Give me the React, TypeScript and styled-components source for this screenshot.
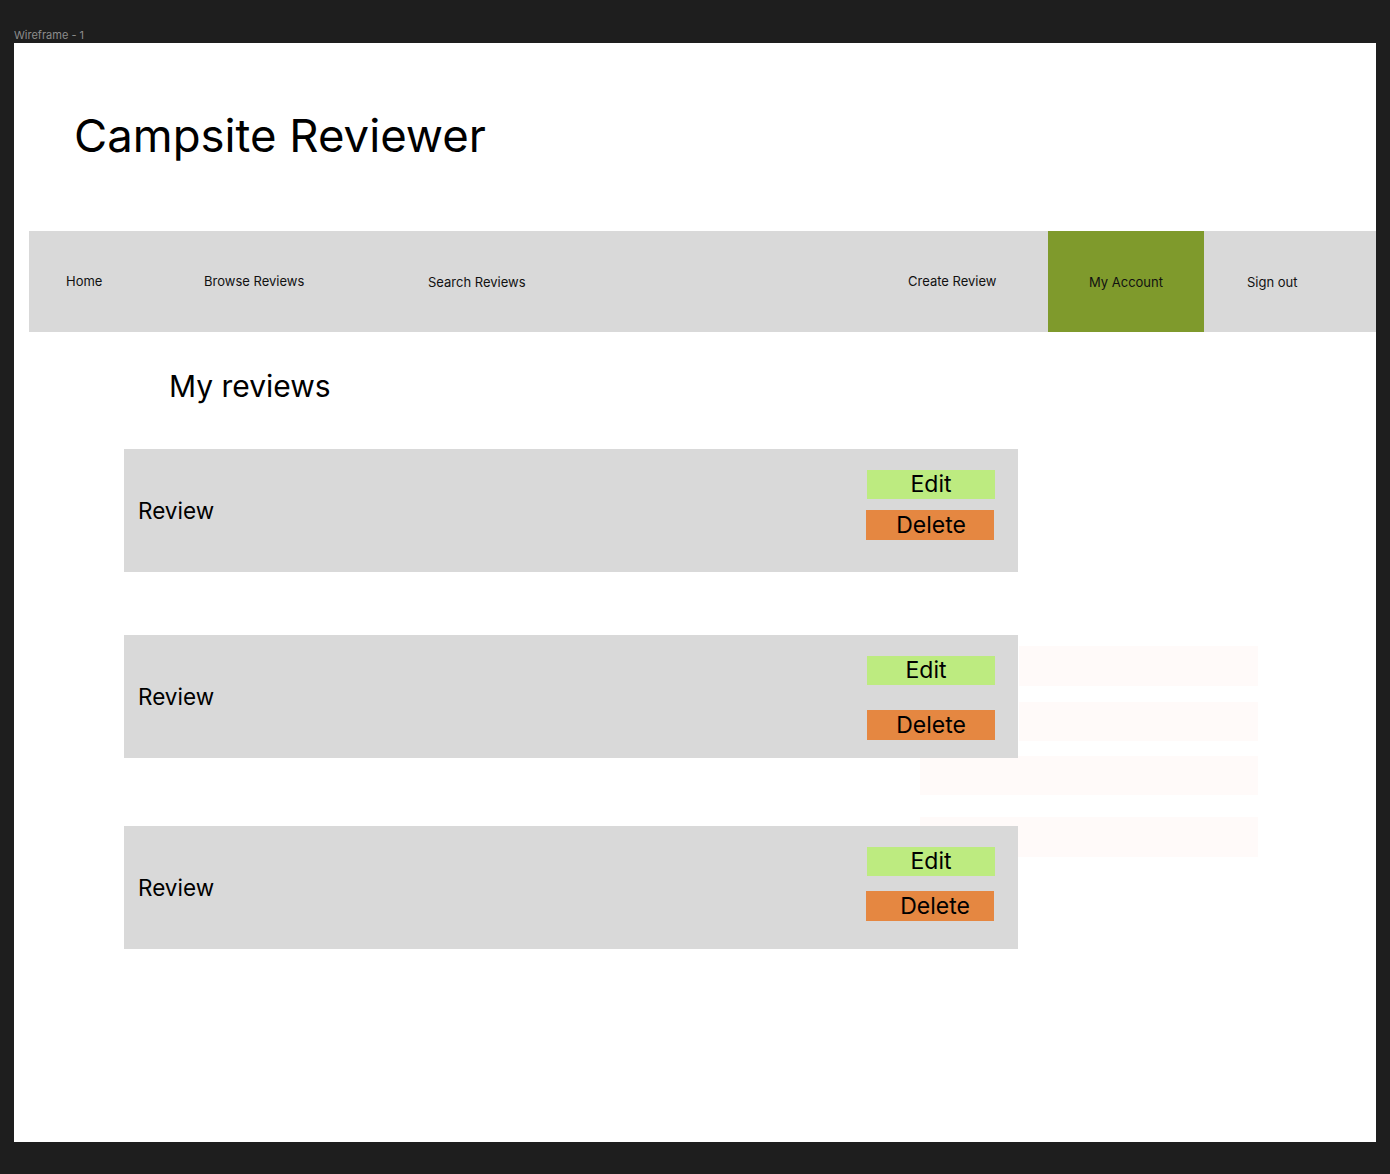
import React from "react";
import styled, { createGlobalStyle } from "styled-components";

const GlobalStyle = createGlobalStyle`
  html, body {
    margin: 0;
    padding: 0;
    background: #1e1e1e;
    font-family: Inter, "Noto Sans", "Liberation Sans", sans-serif;
  }
  * { box-sizing: border-box; }
`;

const Canvas = styled.div`
  width: 1390px;
  height: 1174px;
  padding: 28px 14px 0 14px;
  background: #1e1e1e;
`;

const FrameLabel = styled.div`
  height: 15px;
  font-size: 11px;
  line-height: 15px;
  color: #8c8c8c;
`;

const Frame = styled.div`
  position: relative;
  width: 1362px;
  height: 1099px;
  background: #ffffff;
`;

const Ghost = styled.div<{ $x: number; $y: number; $w: number; $h: number }>`
  position: absolute;
  left: ${(p) => p.$x}px;
  top: ${(p) => p.$y}px;
  width: ${(p) => p.$w}px;
  height: ${(p) => p.$h}px;
  background: #fffaf9;
  z-index: 0;
`;

const TitleBar = styled.header`
  height: 188px;
  padding: 64px 0 0 60px;
`;

const Title = styled.h1`
  margin: 0;
  font-size: 45.5px;
  font-weight: 400;
  line-height: 58px;
  color: #000;
`;

const Nav = styled.nav`
  display: flex;
  margin-left: 15px;
  height: 101px;
  background: #d9d9d9;
`;

const NavItem = styled.div<{ $w: number; $pl?: number; $active?: boolean; $dy: number }>`
  display: flex;
  align-items: center;
  justify-content: ${(p) => (p.$active ? "center" : "flex-start")};
  width: ${(p) => p.$w}px;
  flex: 0 0 auto;
  padding-left: ${(p) => p.$pl ?? 0}px;
  padding-top: ${(p) => Math.max(p.$dy, 0) * 2}px;
  padding-bottom: ${(p) => Math.max(-p.$dy, 0) * 2}px;
  background: ${(p) => (p.$active ? "#7f9a2c" : "transparent")};
  font-size: 13px;
  color: #111;
`;

const Main = styled.main`
  position: relative;
  z-index: 1;
  padding-left: 110px;
`;

const Heading = styled.h2`
  margin: 36px 0 0 45px;
  font-size: 30px;
  font-weight: 400;
  line-height: 36px;
  color: #000;
`;

const List = styled.div`
  display: flex;
  flex-direction: column;
  margin-top: 45px;
`;

const Card = styled.div<{ $mt: number }>`
  display: flex;
  align-items: center;
  width: 894px;
  height: 123px;
  margin-top: ${(p) => p.$mt}px;
  padding: 0 23px 0 14px;
  background: #d9d9d9;
`;

const CardLabel = styled.span`
  font-size: 22.5px;
  color: #000;
`;

const Actions = styled.div<{ $gap: number }>`
  display: flex;
  flex-direction: column;
  align-self: flex-start;
  gap: ${(p) => p.$gap}px;
  margin-left: auto;
  padding-top: 21px;
`;

const ActionButton = styled.div<{ $kind: "edit" | "delete"; $dx: number; $shift: number }>`
  width: 128px;
  height: ${(p) => (p.$kind === "edit" ? 29 : 30)}px;
  margin-left: ${(p) => p.$dx}px;
  padding-left: ${(p) => Math.max(p.$shift, 0) * 2}px;
  padding-right: ${(p) => Math.max(-p.$shift, 0) * 2}px;
  background: ${(p) => (p.$kind === "edit" ? "#bdeb80" : "#e58741")};
  color: #000;
  font-size: 23px;
  line-height: ${(p) => (p.$kind === "edit" ? 28 : 31)}px;
  text-align: center;
`;

const navItems = [
  { label: "Home", w: 137, pl: 37, dy: -0.5 },
  { label: "Browse Reviews", w: 224, pl: 38, dy: -0.5 },
  { label: "Search Reviews", w: 480, pl: 38, dy: 0 },
  { label: "Create Review", w: 178, pl: 38, dy: -1 },
  { label: "My Account", w: 156, active: true, dy: 0 },
  { label: "Sign out", w: 172, pl: 43, dy: 0 },
];

const reviews = [
  { mt: 0, gap: 11, editDx: 0, delDx: -1, editShift: 0, delShift: 1 },
  { mt: 63, gap: 25, editDx: 0, delDx: 0, editShift: -5, delShift: 0 },
  { mt: 68, gap: 15, editDx: 0, delDx: -1, editShift: 0, delShift: 5 },
];

export default function App() {
  return (
    <>
      <GlobalStyle />
      <Canvas>
        <FrameLabel>Wireframe - 1</FrameLabel>
        <Frame>
          <Ghost $x={1005} $y={603} $w={239} $h={40} />
          <Ghost $x={1005} $y={659} $w={239} $h={39} />
          <Ghost $x={906} $y={713} $w={338} $h={39} />
          <Ghost $x={906} $y={774} $w={338} $h={40} />
          <TitleBar>
            <Title>Campsite Reviewer</Title>
          </TitleBar>
          <Nav>
            {navItems.map((n) => (
              <NavItem key={n.label} $w={n.w} $pl={n.pl} $active={n.active} $dy={n.dy}>
                {n.label}
              </NavItem>
            ))}
          </Nav>
          <Main>
            <Heading>My reviews</Heading>
            <List>
              {reviews.map((r, i) => (
                <Card key={i} $mt={r.mt}>
                  <CardLabel>Review</CardLabel>
                  <Actions $gap={r.gap}>
                    <ActionButton $kind="edit" $dx={r.editDx} $shift={r.editShift}>
                      Edit
                    </ActionButton>
                    <ActionButton $kind="delete" $dx={r.delDx} $shift={r.delShift}>
                      Delete
                    </ActionButton>
                  </Actions>
                </Card>
              ))}
            </List>
          </Main>
        </Frame>
      </Canvas>
    </>
  );
}
